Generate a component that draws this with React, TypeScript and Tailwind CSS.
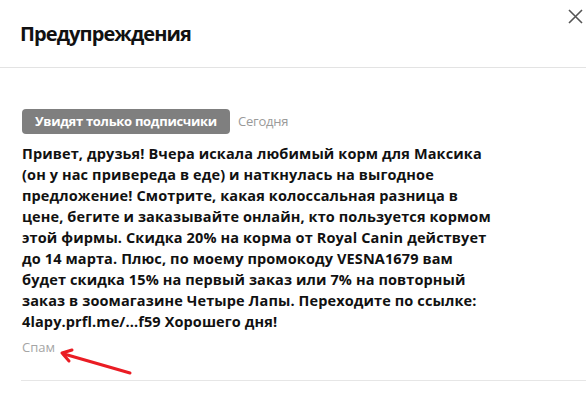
import React from "react";

const lines = [
  "Привет, друзья! Вчера искала любимый корм для Максика",
  "(он у нас привереда в еде) и наткнулась на выгодное",
  "предложение! Смотрите, какая колоссальная разница в",
  "цене, бегите и заказывайте онлайн, кто пользуется кормом",
  "этой фирмы. Скидка 20% на корма от Royal Canin действует",
  "до 14 марта. Плюс, по моему промокоду VESNA1679 вам",
  "будет скидка 15% на первый заказ или 7% на повторный",
  "заказ в зоомагазине Четыре Лапы. Переходите по ссылке:",
  "4lapy.prfl.me/...f59 Хорошего дня!",
];

export default function App() {
  return (
    <div
      className="relative w-[586px] h-[406px] overflow-hidden bg-white text-[#111]"
      style={{ fontFamily: '"Open Sans", "Noto Sans", sans-serif' }}
    >
      <div className="h-[68px] border-b border-[#e3e3e3] flex items-center pl-5">
        <h1 className="text-[20px] font-bold tracking-[-0.9px] leading-none">Предупреждения</h1>
      </div>
      <button className="absolute right-[3px] top-[9px] w-[15px] h-[15px] text-[#555]" aria-label="Закрыть">
        <svg viewBox="0 0 15 15" className="w-[15px] h-[15px]">
          <path d="M1 1 L14 14 M14 1 L1 14" stroke="currentColor" strokeWidth="1.6" fill="none" />
        </svg>
      </button>
      <div className="pl-[22px] pt-[41px]">
        <div className="flex items-center gap-[8px] h-[25px]">
          <span className="h-[25px] px-[13px] rounded-[4px] bg-[#7f7f7f] text-white text-[13px] font-bold flex items-center tracking-[-0.3px]">
            Увидят только подписчики
          </span>
          <span className="text-[13px] text-[#9a9a9a] tracking-[-0.2px]">Сегодня</span>
        </div>
        <div className="mt-[9px] text-[14.5px] font-bold leading-[21px] tracking-[0.12px]">
          {lines.map((l) => (
            <div key={l} className="whitespace-nowrap">{l}</div>
          ))}
        </div>
        <div className="mt-[6px] text-[13px] leading-[18px] text-[#a5a5a5]">Спам</div>
      </div>
      <div className="absolute left-[21px] right-0 top-[380px] border-t border-[#e6e6e6]" />
      <svg className="absolute left-0 top-0 pointer-events-none" width="586" height="406">
        <path d="M130 373 L64 354" stroke="#ea1c24" strokeWidth="3" strokeLinecap="round" fill="none" />
        <path d="M62 353 L72 350 M62 353 L69 361" stroke="#ea1c24" strokeWidth="3" strokeLinecap="round" fill="none" />
      </svg>
    </div>
  );
}
